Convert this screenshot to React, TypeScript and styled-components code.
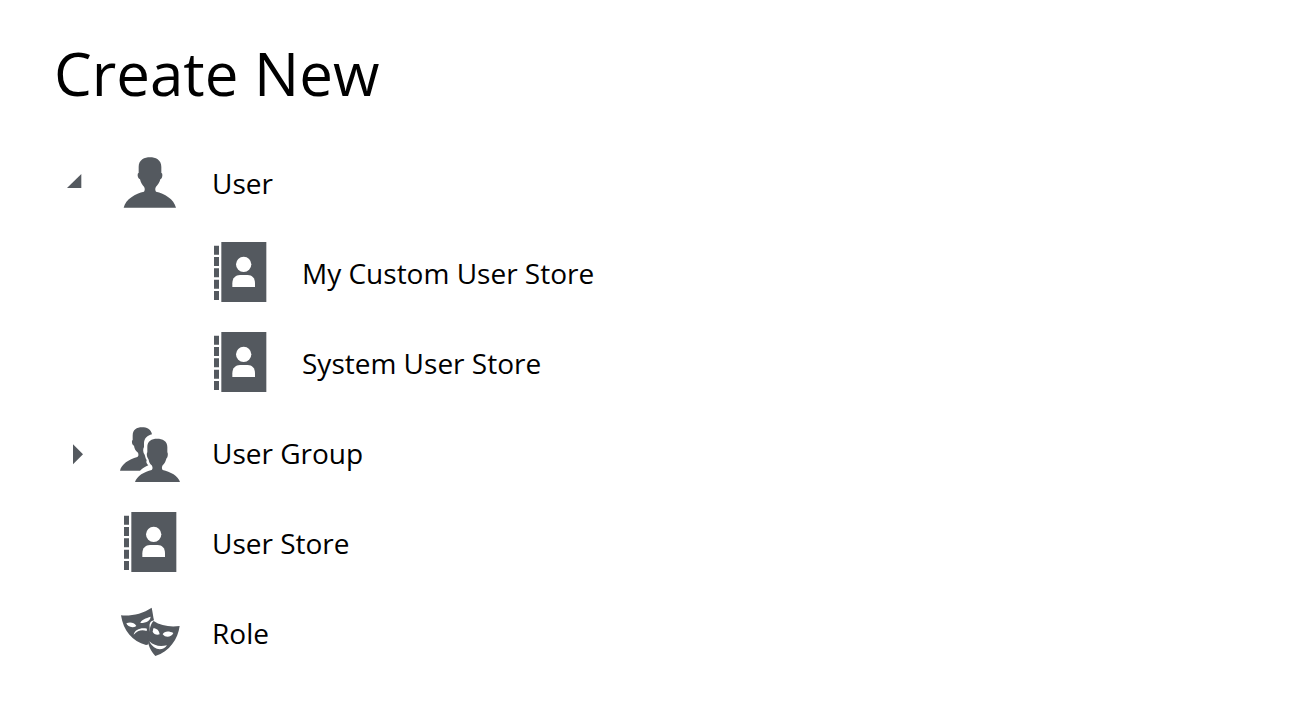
import React, { useState } from "react";
import styled, { createGlobalStyle } from "styled-components";

const GlobalStyle = createGlobalStyle`
  body {
    margin: 0;
    background: #fff;
    color: #000;
    font-family: "Open Sans", "Noto Sans", sans-serif;
  }
`;

const Panel = styled.main`
  padding: 31px 54px 40px;
`;

const Title = styled.h1`
  margin: 0 0 22px;
  font-size: 60px;
  font-weight: 400;
  line-height: 84px;
`;

const List = styled.ul<{ $nested?: boolean }>`
  list-style: none;
  margin: 0;
  padding: 0 0 0 ${(p) => (p.$nested ? 90 : 6)}px;
`;

const Row = styled.div`
  display: flex;
  align-items: center;
  height: 90px;
`;

const ToggleSlot = styled.span`
  flex: none;
  width: 60px;
  height: 60px;
`;

const Toggle = styled.button`
  display: block;
  width: 30px;
  height: 60px;
  margin: 0;
  padding: 0;
  border: 0;
  background: none;
  cursor: pointer;
`;

const Glyph = styled.svg`
  display: block;
  flex: none;
  height: 60px;
  fill: #54595f;
`;

const ItemLink = styled.a`
  display: flex;
  align-items: center;
  gap: 32px;
  color: inherit;
  text-decoration: none;
`;

const Label = styled.span`
  padding-top: 2px;
  font-size: 28px;
  line-height: 40px;
  white-space: nowrap;
`;

const PersonIcon = () => (
  <Glyph width="60" viewBox="0 0 180 180" aria-hidden="true">
    <path d="M90 16C106 16 124 23 124 45L124 63C127 63 127 67 127 71C126 77 125 80 121 82C119 91 113 99 108 104C105 108 105 115 108 119C133 124 162 141 168 167L11 167C17 141 47 124 72 119C75 115 75 108 72 104C67 99 62 91 60 82C56 80 54 77 53 71C53 67 53 63 56 63L56 45C56 23 74 16 90 16Z" />
  </Glyph>
);

const GroupIcon = () => (
  <Glyph width="60" viewBox="0 0 180 180" aria-hidden="true">
    <path d="M66 16C80 16 93 21 96 37C82 41 73 48 72 63L72 75C68 81 69 92 74 98C76 105 77 109 80 114C78 120 79 125 85 130C77 134 67 139 60 146L0 146C4 127 26 112 52 105C56 102 56 97 54 92C47 87 43 79 42 71C37 69 35 62 36 56L38 54L38 41C38 23 50 16 66 16Z" />
    <g transform="translate(45 50)">
      <path d="M66 0C83 0 97 7 97 25L97 41C99 43 99 51 97 56C95 58 94 60 93 63C91 70 87 76 83 80C80 84 80 91 83 94C105 98 131 113 135 130L0 130C5 113 29 98 50 94C54 91 53 84 50 80C45 76 42 70 41 63C39 60 38 58 37 56C35 51 35 43 37 41L37 25C37 7 50 0 66 0Z" />
    </g>
  </Glyph>
);

const StoreIcon = () => (
  <Glyph width="60" viewBox="0 0 180 180" aria-hidden="true">
    <path d="M34 0H169V180H34ZM12 11H27V38H12ZM12 45H27V72H12ZM12 79H27V106H12ZM12 113H27V140H12ZM12 147H27V174H12Z" />
    <circle cx="101" cy="67" r="23" fill="#fff" />
    <path fill="#fff" d="M67 135V124C67 108 77 99 90 99H113C126 99 135 108 135 124V135Z" />
  </Glyph>
);

const MasksIcon = () => (
  <Glyph width="60" viewBox="0 0 180 180" aria-hidden="true">
    <path d="M3 40C34 43 68 35 95 17C98 30 99 42 102 55C89 58 88 66 89 77L86 124C85 127 84 129 78 129C37 119 10 86 3 40Z" />
    <path d="M101 57C122 71 149 76 179 72C174 111 149 148 106 162C86 140 80 119 86 94C90 79 92 65 101 57Z" />
    <g fill="#fff">
      <path d="M19 64C30 60 42 61 49 72C39 79 22 75 19 64Z" />
      <path d="M61 63C65 52 77 49 92 44C91 55 82 63 61 63Z" />
      <path d="M41 98C44 83 62 76 81 80L80 87C66 82 53 85 41 98Z" />
      <path d="M100 79C111 79 117 86 119 97C110 100 101 96 98 89Z" />
      <path d="M128 97C133 87 146 86 160 93C154 106 137 109 128 97Z" />
      <path d="M88 118C103 132 120 135 141 130C129 148 101 146 88 118Z" />
    </g>
  </Glyph>
);

type Item = {
  label: string;
  icon: React.ComponentType;
  children?: Item[];
};

const ITEMS: Item[] = [
  {
    label: "User",
    icon: PersonIcon,
    children: [
      { label: "My Custom User Store", icon: StoreIcon },
      { label: "System User Store", icon: StoreIcon },
    ],
  },
  { label: "User Group", icon: GroupIcon, children: [] },
  { label: "User Store", icon: StoreIcon },
  { label: "Role", icon: MasksIcon },
];

function TreeItem({ item }: { item: Item }) {
  const [open, setOpen] = useState(Boolean(item.children?.length));
  const Icon = item.icon;
  return (
    <li>
      <Row>
        <ToggleSlot>
          {item.children && (
            <Toggle
              type="button"
              aria-expanded={open}
              aria-label={item.label}
              onClick={() => setOpen(!open)}
            >
              <Glyph width="30" viewBox="0 0 90 180" aria-hidden="true">
                <path d={open ? "M21 108L64 108L64 66Z" : "M39 67L69 97L39 127Z"} />
              </Glyph>
            </Toggle>
          )}
        </ToggleSlot>
        <ItemLink href="#">
          <Icon />
          <Label>{item.label}</Label>
        </ItemLink>
      </Row>
      {open && item.children && item.children.length > 0 && (
        <List $nested>
          {item.children.map((child) => (
            <TreeItem key={child.label} item={child} />
          ))}
        </List>
      )}
    </li>
  );
}

export default function App() {
  return (
    <>
      <GlobalStyle />
      <Panel>
        <Title>Create New</Title>
        <List>
          {ITEMS.map((item) => (
            <TreeItem key={item.label} item={item} />
          ))}
        </List>
      </Panel>
    </>
  );
}
